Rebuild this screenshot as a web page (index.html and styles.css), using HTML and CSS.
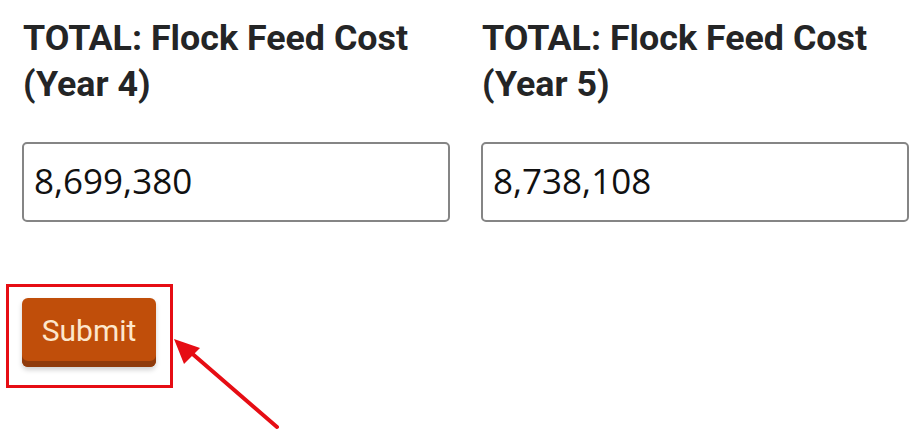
FILE: index.html
```html
<!DOCTYPE html>
<html lang="en">
<head>
<meta charset="utf-8">
<title>Flock Feed Cost</title>
<link rel="stylesheet" href="styles.css">
</head>
<body>
<main class="page">
  <div class="fields">
    <div class="field">
      <label class="label" for="y4"><span class="line">TOTAL: Flock Feed Cost</span><span class="line">(Year 4)</span></label>
      <input class="input" id="y4" type="text" value="8,699,380">
    </div>
    <div class="field">
      <label class="label" for="y5"><span class="line">TOTAL: Flock Feed Cost</span><span class="line">(Year 5)</span></label>
      <input class="input" id="y5" type="text" value="8,738,108">
    </div>
  </div>
  <div class="actions">
    <button class="submit" type="button">Submit</button>
    <span class="highlight"></span>
    <svg class="arrow" width="120" height="100" viewBox="0 0 120 100">
      <line x1="111" y1="93" x2="22" y2="16" stroke="#e60d14" stroke-width="4" stroke-linecap="round"/>
      <polygon points="8,5 34,14 18,30" fill="#e60d14"/>
    </svg>
  </div>
</main>
</body>
</html>
```

FILE: styles.css
```css
html, body {
  margin: 0;
  padding: 0;
  background: #ffffff;
}

.page {
  width: 919px;
  height: 441px;
  padding: 15px 0 0 22px;
  box-sizing: border-box;
  overflow: hidden;
}

.fields {
  display: grid;
  grid-template-columns: 428px 428px;
  column-gap: 31px;
}

.field {
  display: flex;
  flex-direction: column;
}

.label {
  display: flex;
  flex-direction: column;
  font-family: Roboto, "Liberation Sans", sans-serif;
  font-weight: 700;
  font-size: 35.8px;
  line-height: 46px;
  color: #242526;
  padding-left: 1px;
  height: 92px;
}

.line {
  white-space: nowrap;
}

.input {
  margin-top: 35px;
  height: 80px;
  box-sizing: border-box;
  border: 2px solid #858585;
  border-radius: 5px;
  padding: 0 10px 4px 10px;
  font-family: "Open Sans", "Noto Sans", sans-serif;
  font-size: 35px;
  color: #111111;
  background: #ffffff;
  outline: none;
}

.actions {
  position: relative;
  margin-top: 76px;
}

.submit {
  display: block;
  width: 134px;
  height: 69px;
  border: 0;
  border-radius: 6px;
  background: #c04e0a;
  box-shadow: inset 0 -6px 0 #8f3b0c, 0 3px 5px rgba(0, 0, 0, 0.18);
  color: #fde7cc;
  font-family: Roboto, "Liberation Sans", sans-serif;
  font-size: 30px;
  padding: 0 0 4px 0;
  cursor: pointer;
}

.highlight {
  position: absolute;
  left: -16px;
  top: -14px;
  width: 161px;
  height: 98px;
  border: 3px solid #e60d14;
  pointer-events: none;
}

.arrow {
  position: absolute;
  left: 144px;
  top: 36px;
  overflow: visible;
}
```
